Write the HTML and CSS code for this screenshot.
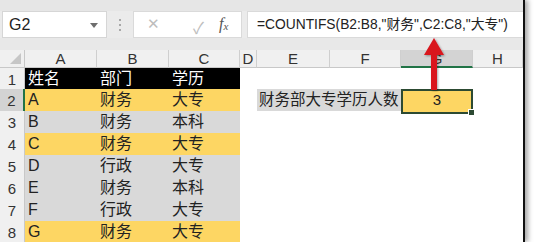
FILE: index.html
```html
<!DOCTYPE html>
<html lang="zh">
<head>
<meta charset="utf-8">
<link rel="stylesheet" href="styles.css">
</head>
<body>
<div class="frame">
  <div class="topband"></div>
  <div class="fbar">
    <div class="namebox"><span class="name">G2</span><span class="caret"></span></div>
    <div class="dots"><i></i><i></i><i></i></div>
    <div class="fxbox">
      <span class="ic x">✕</span>
      <span class="ic ok">✓</span>
      <span class="fx">f<sub>x</sub></span>
    </div>
    <div class="input">=COUNTIFS(B2:B8,"财务",C2:C8,"大专")</div>
  </div>
  <div class="gap"></div>
  <div class="sheet">
    <div class="row hdr">
      <div class="corner"><span class="tri"></span></div>
      <div class="ch">A</div><div class="ch">B</div><div class="ch">C</div><div class="ch">D</div>
      <div class="ch">E</div><div class="ch">F</div><div class="ch sel">G</div><div class="ch">H</div>
    </div>
    <div class="row r1">
      <div class="rh">1</div>
      <div class="c blk">姓名</div><div class="c blk">部门</div><div class="c blk">学历</div>
      <div class="c"></div><div class="c"></div><div class="c"></div><div class="c"></div><div class="c"></div>
    </div>
    <div class="row">
      <div class="rh sel">2</div>
      <div class="c yel">A</div><div class="c yel">财务</div><div class="c yel">大专</div>
      <div class="c"></div>
      <div class="c span2"><span class="label">财务部大专学历人数</span></div>
      <div class="c g2"><span>3</span><i class="handle"></i></div>
      <div class="c"></div>
    </div>
    <div class="row">
      <div class="rh">3</div>
      <div class="c gry">B</div><div class="c gry">财务</div><div class="c gry">本科</div>
      <div class="c"></div><div class="c"></div><div class="c"></div><div class="c"></div><div class="c"></div>
    </div>
    <div class="row">
      <div class="rh">4</div>
      <div class="c yel">C</div><div class="c yel">财务</div><div class="c yel">大专</div>
      <div class="c"></div><div class="c"></div><div class="c"></div><div class="c"></div><div class="c"></div>
    </div>
    <div class="row">
      <div class="rh">5</div>
      <div class="c gry">D</div><div class="c gry">行政</div><div class="c gry">大专</div>
      <div class="c"></div><div class="c"></div><div class="c"></div><div class="c"></div><div class="c"></div>
    </div>
    <div class="row">
      <div class="rh">6</div>
      <div class="c gry">E</div><div class="c gry">财务</div><div class="c gry">本科</div>
      <div class="c"></div><div class="c"></div><div class="c"></div><div class="c"></div><div class="c"></div>
    </div>
    <div class="row">
      <div class="rh">7</div>
      <div class="c gry">F</div><div class="c gry">行政</div><div class="c gry">大专</div>
      <div class="c"></div><div class="c"></div><div class="c"></div><div class="c"></div><div class="c"></div>
    </div>
    <div class="row">
      <div class="rh">8</div>
      <div class="c yel">G</div><div class="c yel">财务</div><div class="c yel">大专</div>
      <div class="c"></div><div class="c"></div><div class="c"></div><div class="c"></div><div class="c"></div>
    </div>
  </div>
  <svg class="arrow" width="30" height="56" viewBox="0 0 30 56">
    <defs>
      <filter id="sh" x="-50%" y="-20%" width="200%" height="140%">
        <feDropShadow dx="1" dy="1" stdDeviation="1.2" flood-color="#000" flood-opacity="0.35"/>
      </filter>
    </defs>
    <path d="M15 2 L25 19 L18 19 L18 54 L12 54 L12 19 L5 19 Z" fill="#d9141e" filter="url(#sh)"/>
  </svg>
</div>
</body>
</html>
```
FILE: styles.css
```css
html, body {
  margin: 0;
  padding: 0;
  background: #ffffff;
}
body {
  width: 546px;
  height: 242px;
  overflow: hidden;
  font-family: "Liberation Sans", "Noto Sans CJK SC", sans-serif;
}
.frame {
  position: relative;
  width: 523px;
  height: 242px;
  background: #e8e8e8;
  border-right: 2px solid #111;
  box-shadow: 3px 0 5px rgba(0,0,0,0.35);
}
.topband {
  height: 11px;
  background: #e6e6e6;
}
.fbar {
  display: flex;
  height: 27px;
  background: #ebebeb;
}
.namebox {
  width: 105px;
  margin-left: 2px;
  background: #fff;
  border: 1px solid #d6d6d6;
  box-sizing: border-box;
  display: flex;
  align-items: center;
  justify-content: space-between;
  padding: 0 8px 0 6px;
}
.name {
  font-size: 16px;
  color: #222;
}
.caret {
  width: 0;
  height: 0;
  border-left: 4px solid transparent;
  border-right: 4px solid transparent;
  border-top: 5px solid #6e6e6e;
  margin-top: 1px;
}
.dots {
  width: 26px;
  display: flex;
  flex-direction: column;
  align-items: center;
  justify-content: center;
  gap: 3px;
}
.dots i {
  display: block;
  width: 2px;
  height: 2px;
  background: #a8a8a8;
}
.fxbox {
  width: 109px;
  background: #fff;
  border: 1px solid #dadada;
  box-sizing: border-box;
  display: flex;
  align-items: center;
  position: relative;
}
.ic {
  position: absolute;
  top: 3px;
  font-size: 15px;
  color: #bdbdbd;
}
.ic.x { left: 13px; }
.ic.ok { left: 59px; font-size: 16px; }
.fx {
  position: absolute;
  left: 85px;
  top: 3px;
  font-family: "Liberation Serif", serif;
  font-style: italic;
  font-size: 16px;
  color: #555;
}
.fx sub {
  font-size: 11px;
  vertical-align: -1px;
}
.input {
  flex: 1;
  margin-left: 5px;
  background: #fff;
  border: 1px solid #dadada;
  border-right: none;
  box-sizing: border-box;
  font-size: 13.8px;
  line-height: 25px;
  padding-left: 9px;
  color: #222;
  white-space: nowrap;
  overflow: hidden;
}
.gap {
  height: 12px;
  background: #e8e8e8;
}
.sheet {
  background: #fff;
}
.row {
  display: grid;
  grid-template-columns: 25px 72px 72px 71px 17px 73px 71px 72px 50px;
  height: 22px;
}
.row.hdr {
  height: 18px;
  background: #f0f0f0;
}
.row.r1 {
  height: 21px;
}
.corner {
  position: relative;
  border-right: 1px solid #c8c8c8;
  border-bottom: 1px solid #c8c8c8;
}
.tri {
  position: absolute;
  right: 3px;
  bottom: 3px;
  width: 0;
  height: 0;
  border-left: 11px solid transparent;
  border-bottom: 11px solid #c6c6c6;
}
.ch {
  border-right: 1px solid #cfcfcf;
  border-bottom: 1px solid #c8c8c8;
  font-size: 15px;
  line-height: 18px;
  text-align: center;
  color: #333;
  overflow: hidden;
}
.ch.sel {
  background: #d3d3d3;
  border-bottom: 2px solid #217346;
}
.rh {
  background: #f0f0f0;
  border-right: 1px solid #c8c8c8;
  border-bottom: 1px solid #d8d8d8;
  box-sizing: border-box;
  font-size: 15px;
  line-height: 24px;
  text-align: center;
  color: #333;
}
.rh.sel {
  background: #d3d3d3;
  border-right: 2px solid #217346;
}
.c {
  font-size: 16px;
  line-height: 22px;
  padding-left: 3px;
  color: #222;
  white-space: nowrap;
  font-family: "Liberation Sans", "Noto Sans CJK SC", sans-serif;
}
.c.blk {
  background: #000;
  color: #fff;
  line-height: 21px;
}
.c.yel {
  background: #fdd663;
}
.c.gry {
  background: #d9d9d9;
}
.span2 {
  grid-column: span 2;
  padding-left: 0;
}
.label {
  display: block;
  background: #d9d9d9;
  width: 144px;
  height: 22px;
  padding-left: 2px;
  font-size: 15.5px;
}
.g2 {
  position: relative;
  background: #fdd663;
  border: 2px solid #2c4a32;
  box-sizing: border-box;
  text-align: center;
  padding-left: 0;
  line-height: 18px;
  font-size: 15px;
}
.handle {
  position: absolute;
  right: -4px;
  bottom: -4px;
  width: 5px;
  height: 5px;
  background: #2c4a32;
  border: 1px solid #fff;
}
.arrow {
  position: absolute;
  left: 419px;
  top: 36px;
}
```
